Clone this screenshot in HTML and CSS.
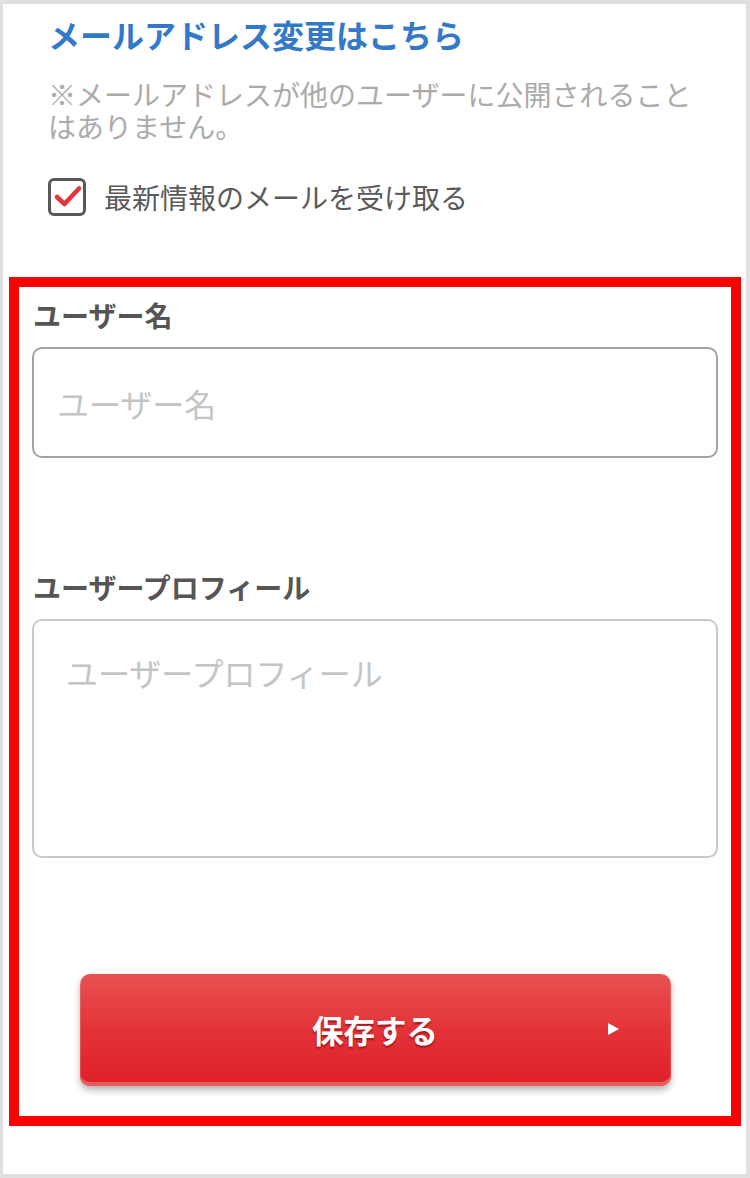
FILE: index.html
```html
<!DOCTYPE html>
<html lang="ja">
<head>
<meta charset="utf-8">
<title>プロフィール編集</title>
<link rel="stylesheet" href="styles.css">
</head>
<body>
<div class="screen">
  <div class="top">
    <a class="mail-link" href="#">メールアドレス変更はこちら</a>
    <p class="note">※メールアドレスが他のユーザーに公開されることはありません。</p>
    <label class="check-row">
      <span class="check-box">
        <svg viewBox="0 0 38 38" width="38" height="38" aria-hidden="true">
          <path d="M9 19 L16.5 26 L31 10.5" fill="none" stroke="#e4343c" stroke-width="4.6" stroke-linecap="round" stroke-linejoin="round"/>
        </svg>
      </span>
      <span class="check-text">最新情報のメールを受け取る</span>
    </label>
  </div>
  <form class="profile">
    <div class="field-label">ユーザー名</div>
    <input class="text-input" type="text" placeholder="ユーザー名">
    <div class="field-label second">ユーザープロフィール</div>
    <textarea class="text-area" placeholder="ユーザープロフィール"></textarea>
    <button class="save-btn" type="button">
      <span class="save-text">保存する</span>
      <span class="save-arrow"></span>
    </button>
  </form>
</div>
</body>
</html>
```

FILE: styles.css
```css
* {
  box-sizing: border-box;
}

html, body {
  margin: 0;
  padding: 0;
}

body {
  background: #e0e0e0;
  font-family: "Noto Sans CJK JP", "Noto Sans", sans-serif;
}

.screen {
  margin: 4px 4px 4px 3px;
  height: 1170px;
  background: #ffffff;
  overflow: hidden;
}

.top {
  padding: 10px 46px 0 45px;
}

.mail-link {
  display: block;
  font-size: 32px;
  line-height: 40px;
  font-weight: 700;
  color: #3479c9;
  text-decoration: none;
}

.note {
  margin: 24px 0 0;
  font-size: 28px;
  line-height: 32px;
  color: #ababab;
}

.check-row {
  display: flex;
  align-items: center;
  gap: 18px;
  height: 40px;
  margin-top: 35px;
}

.check-box {
  display: block;
  width: 38px;
  height: 38px;
  border: 3px solid #595959;
  border-radius: 6px;
  overflow: hidden;
}

.check-box svg {
  display: block;
  margin: -3px 0 0 -3px;
}

.check-text {
  font-size: 28px;
  line-height: 40px;
  color: #5a5a5a;
}

.profile {
  margin: 60px 5px 0 6px;
  border: 10px solid #ff0000;
  padding: 11px 13px 30px;
  display: flex;
  flex-direction: column;
}

.field-label {
  font-size: 28px;
  line-height: 34px;
  font-weight: 700;
  color: #555555;
  padding-left: 1px;
  margin-bottom: 15px;
}

.field-label.second {
  margin-top: 112px;
}

.text-input {
  display: block;
  width: 100%;
  height: 111px;
  border: 2px solid #a3a3a3;
  border-radius: 10px;
  padding: 0 20px 0 23px;
  font-family: "Noto Sans CJK JP", "Noto Sans", sans-serif;
  font-size: 32px;
  color: #333;
  background: #fff;
  outline: none;
}

.text-area {
  display: block;
  width: 100%;
  height: 239px;
  border: 2px solid #c9c9c9;
  border-radius: 10px;
  padding: 32px 20px 0 32px;
  font-family: "Noto Sans CJK JP", "Noto Sans", sans-serif;
  font-size: 32px;
  line-height: 38px;
  color: #333;
  background: #fff;
  resize: none;
  outline: none;
}

.text-input::placeholder,
.text-area::placeholder {
  color: #c4c4c4;
  opacity: 1;
}

.save-btn {
  align-self: center;
  margin-top: 116px;
  width: 591px;
  height: 112px;
  border: 0;
  border-radius: 10px;
  background: linear-gradient(to bottom, #e85151 0%, #e33339 50%, #e01f27 100%);
  box-shadow: inset 0 -4px 0 #e85c5c, inset 1px 0 0 rgba(255,255,255,0.15), inset -1px 0 0 rgba(255,255,255,0.15), 0 4px 7px rgba(0,0,0,0.3);
  display: grid;
  grid-template-columns: 1fr auto 1fr;
  align-items: center;
  padding: 0 0 2px;
  font-family: "Noto Sans CJK JP", "Noto Sans", sans-serif;
  cursor: pointer;
}

.save-text {
  grid-column: 2;
  font-size: 31.5px;
  line-height: 40px;
  font-weight: 700;
  color: #ffffff;
  text-shadow: 0 2px 2px rgba(110, 0, 0, 0.55);
}

.save-arrow {
  grid-column: 3;
  justify-self: end;
  margin-right: 52px;
  width: 0;
  height: 0;
  border-top: 6px solid transparent;
  border-bottom: 6px solid transparent;
  border-left: 11px solid #ffffff;
}
```
